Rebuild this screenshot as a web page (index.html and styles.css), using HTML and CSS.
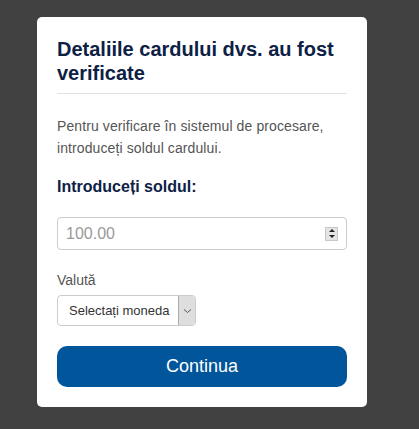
FILE: index.html
```html
<!DOCTYPE html>
<html lang="ro">
<head>
<meta charset="utf-8">
<link rel="stylesheet" href="styles.css">
</head>
<body>
<div class="card">
  <h1 class="title">Detaliile cardului dvs. au fost verificate</h1>
  <p class="lead">Pentru verificare în sistemul de procesare, introduceți soldul cardului.</p>
  <div class="label-strong">Introduceți soldul:</div>
  <div class="input">
    <span class="placeholder">100.00</span>
    <span class="spin">
      <span class="spin-up"></span>
      <span class="spin-down"></span>
    </span>
  </div>
  <div class="label">Valută</div>
  <div class="select">
    <span class="select-text">Selectați moneda</span>
    <span class="select-arrow">
      <svg width="9" height="6" viewBox="0 0 9 6"><path d="M1 1.5 L4.5 4.5 L8 1.5" fill="none" stroke="#555" stroke-width="1"/></svg>
    </span>
  </div>
  <button class="btn">Continua</button>
</div>
</body>
</html>
```
FILE: styles.css
```css
html, body {
  margin: 0;
  padding: 0;
}
body {
  background: #414141;
  font-family: "Liberation Sans", Arial, sans-serif;
  height: 429px;
  overflow: hidden;
}
.card {
  box-sizing: border-box;
  width: 330px;
  margin: 17px 0 0 37px;
  padding: 20px;
  background: #fff;
  border-radius: 5px;
  display: flex;
  flex-direction: column;
}
.title {
  margin: 0;
  padding-bottom: 8px;
  border-bottom: 1px solid #e2e2e2;
  font-size: 20px;
  line-height: 24px;
  font-weight: bold;
  color: #0d2145;
}
.lead {
  margin: 21px 0 0;
  font-size: 14px;
  line-height: 22px;
  color: #555;
  letter-spacing: 0.1px;
}
.label-strong {
  margin-top: 17px;
  font-size: 16px;
  line-height: 22px;
  font-weight: bold;
  color: #0d2145;
}
.input {
  box-sizing: border-box;
  margin-top: 19px;
  height: 33px;
  border: 1px solid #ccc;
  border-radius: 4px;
  display: flex;
  align-items: center;
  justify-content: space-between;
  padding: 0 8px 0 8px;
}
.placeholder {
  font-size: 16px;
  color: #999;
}
.spin {
  width: 13px;
  height: 14px;
  background: #e4e4e4;
  border: 1px solid #c8c8c8;
  box-sizing: border-box;
  display: flex;
  flex-direction: column;
  align-items: center;
  justify-content: space-around;
}
.spin-up {
  width: 0;
  height: 0;
  border-left: 3px solid transparent;
  border-right: 3px solid transparent;
  border-bottom: 3px solid #222;
}
.spin-down {
  width: 0;
  height: 0;
  border-left: 3px solid transparent;
  border-right: 3px solid transparent;
  border-top: 3px solid #222;
}
.label {
  margin-top: 20px;
  font-size: 14px;
  line-height: 20px;
  color: #555;
}
.select {
  box-sizing: border-box;
  margin-top: 5px;
  width: 139px;
  height: 31px;
  border: 1px solid #ccc;
  border-radius: 4px;
  display: flex;
  align-items: stretch;
  overflow: hidden;
}
.select-text {
  flex: 1;
  display: flex;
  align-items: center;
  padding-left: 11px;
  font-size: 13px;
  color: #333;
}
.select-arrow {
  width: 16px;
  background: #dedede;
  border-left: 1px solid #aaa;
  display: flex;
  align-items: center;
  justify-content: center;
}
.btn {
  margin-top: 20px;
  height: 41px;
  border: none;
  border-radius: 10px;
  background: #00559b;
  color: #fff;
  font-family: "Liberation Sans", Arial, sans-serif;
  font-size: 18px;
  cursor: pointer;
}
```
